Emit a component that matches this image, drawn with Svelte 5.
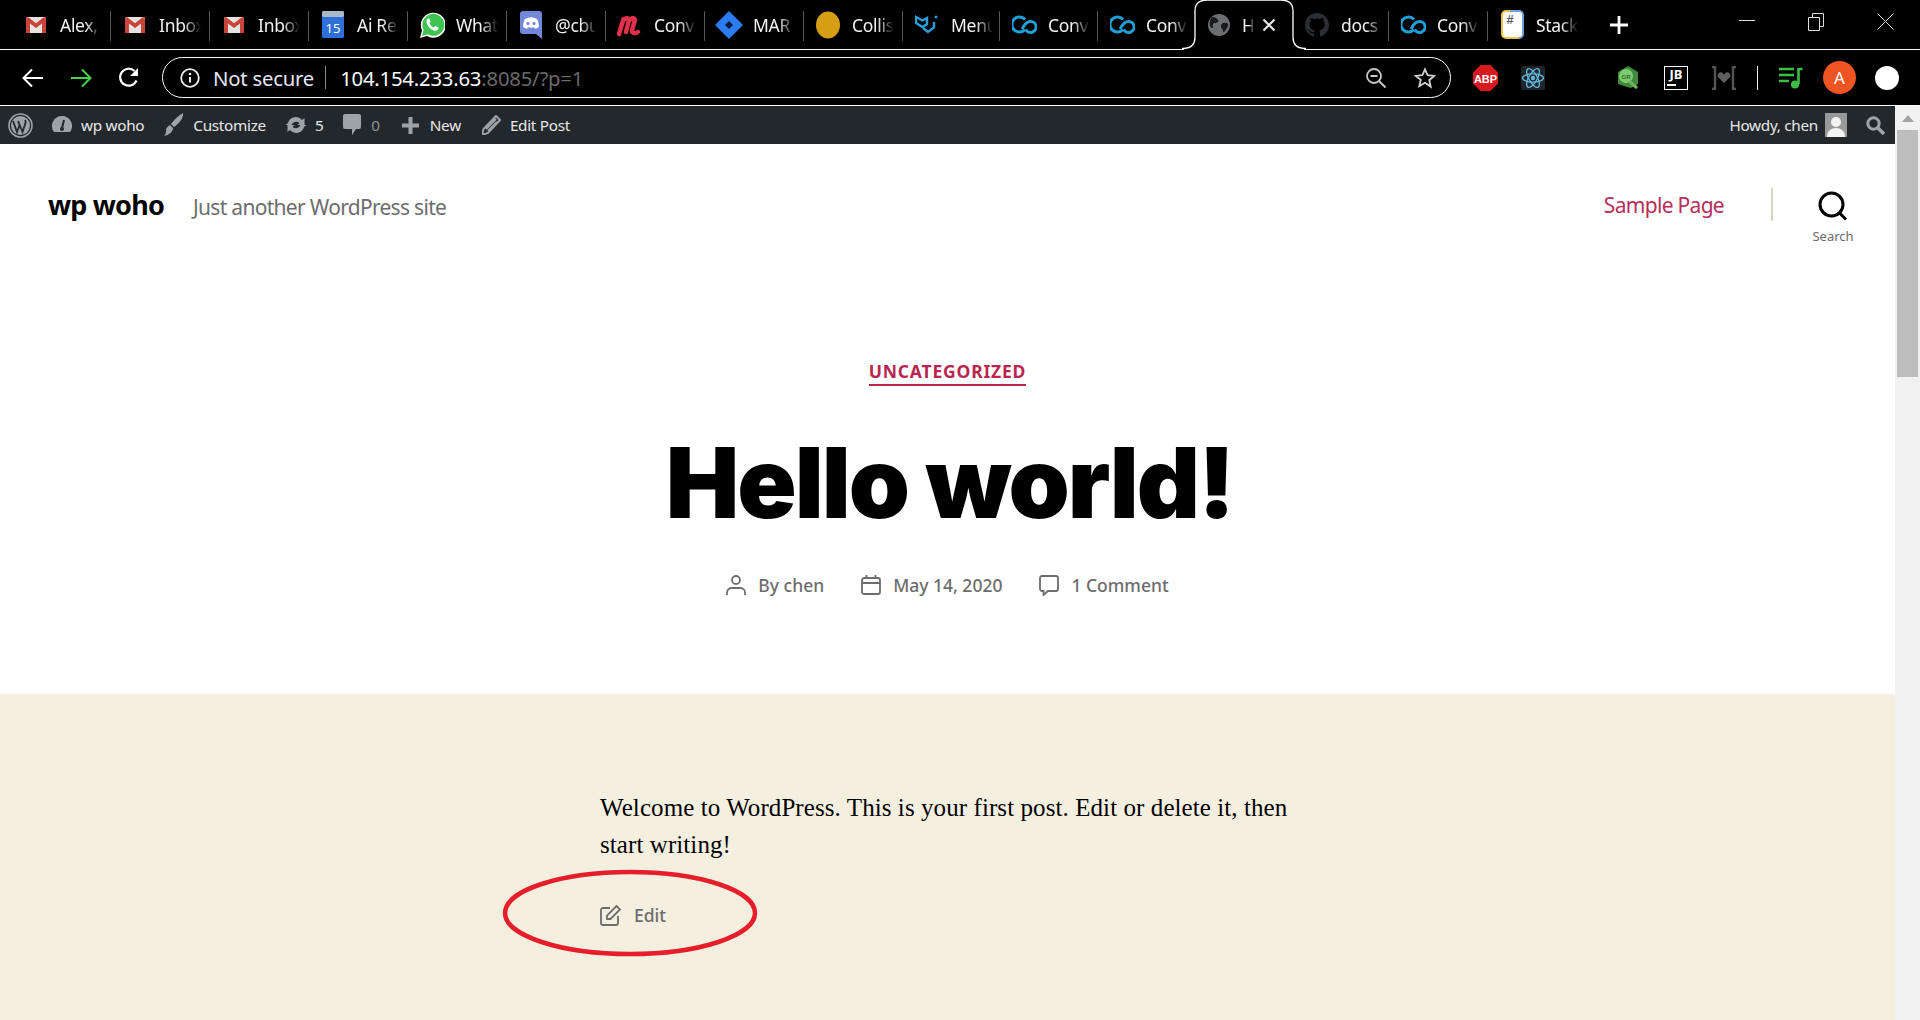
<script>
  const tabs = [
    { i: 'gmail', t: 'Alex,' }, { i: 'gmail', t: 'Inbox' }, { i: 'gmail', t: 'Inbox' },
    { i: 'cal', t: 'Ai Re' }, { i: 'wa', t: 'What' }, { i: 'discord', t: '@cbu' },
    { i: 'meister', t: 'Conv' }, { i: 'jira', t: 'MAR' }, { i: 'dot', t: 'Collis' },
    { i: 'mui', t: 'Menu' }, { i: 'co', t: 'Conv' }, { i: 'co', t: 'Conv' },
    { i: 'globe', t: 'H', active: true }, { i: 'gh', t: 'docs' }, { i: 'co', t: 'Conv' },
    { i: 'stack', t: 'Stack' }
  ];
</script>

{#snippet favicon(kind)}
  {#if kind === 'gmail'}
    <svg width="22" height="18" viewBox="0 0 22 18"><rect x="1" y="1" width="20" height="16" rx="1.5" fill="#e6e2df"/><path d="M1 2.500V17h4V7.500l6 4.600 6-4.600V17h4V2.500L19 1l-8 6.200L3 1z" fill="#c9453a"/></svg>
  {:else if kind === 'cal'}
    <svg width="22" height="27" viewBox="0 0 22 27"><rect x="0" y="0" width="22" height="27" rx="1.500" fill="#2f6fd8"/><rect x="0" y="0" width="22" height="6" rx="1.500" fill="#a9b8c8"/><text x="11" y="22" text-anchor="middle" class="cal">15</text></svg>
  {:else if kind === 'wa'}
    <svg width="26" height="28" viewBox="0 0 26 28"><path d="M1 27l2-7.500A12.500 12.500 0 1 1 8 25z" fill="#fff"/><path d="M3 25l1.600-6A11 11 0 1 1 8.500 23.200z" fill="#3fc351"/><path d="M9 7.500c-1.500 1-2 3-1 5.500 1.300 3.200 3.800 5.600 6.800 6.500 2.300.7 4-.2 4.700-1.800l-.1-1.200-3-1.500-1.500 1.600c-2-.7-3.900-2.600-4.600-4.500l1.200-1.400-1.200-3.100z" fill="#fff"/></svg>
  {:else if kind === 'discord'}
    <svg width="22" height="28" viewBox="0 0 22 28"><path d="M3 0h16a3 3 0 0 1 3 3v25l-6-5H3a3 3 0 0 1-3-3V3a3 3 0 0 1 3-3z" fill="#7289da"/><path d="M5 8c4-2.200 8-2.200 12 0 1.400 2.800 2 5.500 1.800 8-1.500 1.100-2.800 1.600-3.800 1.800l-1-1.500c-2 .6-4 .6-6 0l-1 1.500c-1-.2-2.300-.7-3.800-1.800C3 13.500 3.600 10.800 5 8z" fill="#fff"/><circle cx="8" cy="12.500" r="1.600" fill="#7289da"/><circle cx="14" cy="12.500" r="1.600" fill="#7289da"/></svg>
  {:else if kind === 'meister'}
    <svg width="28" height="24" viewBox="0 0 28 24"><path d="M3 21L7.500 6M7 8c2-3 5-4 6-1L10 19M13 8c2-3 5-4 6-1l-3 10c-.5 3 3 4 6 2" fill="none" stroke="#e2304a" stroke-width="4.500" stroke-linecap="round"/></svg>
  {:else if kind === 'jira'}
    <svg width="28" height="28" viewBox="0 0 28 28"><path d="M14 0l14 14-14 14L0 14z" fill="#2a7cf0"/><path d="M14 10l4 4-4 4-4-4z" fill="#041a38"/></svg>
  {:else if kind === 'dot'}
    <svg width="24" height="28" viewBox="0 0 24 28"><ellipse cx="12" cy="14" rx="12" ry="13.500" fill="#d69e14"/></svg>
  {:else if kind === 'mui'}
    <svg width="25" height="21" viewBox="0 0 25 21"><path d="M1 3l6.500 3.500L12 4v6l-4.500 3L1 9z" fill="none" stroke="#2a9fd8" stroke-width="2.400"/><path d="M8 14l5 4 6-4.500V8" fill="none" stroke="#2a9fd8" stroke-width="2.400"/><circle cx="21" cy="3" r="1.500" fill="#2a9fd8"/></svg>
  {:else if kind === 'co'}
    <svg width="25" height="19" viewBox="0 0 25 19"><path d="M13 4.500A7.500 7.500 0 1 0 13 14.500" fill="none" stroke="#1f9fd8" stroke-width="3"/><path d="M10 14C12 11 13.500 6.500 18.500 6.500a5.500 5.500 0 1 1-4.800 8" fill="none" stroke="#1f9fd8" stroke-width="3"/></svg>
  {:else if kind === 'globe'}
    <svg width="22" height="22" viewBox="0 0 22 22"><circle cx="11" cy="11" r="11" fill="#6d6e70"/><path d="M4 3c3 0 5 1 6 3s-1 3-3 3-3 2-2 4-2 1-3-1 0-7 2-9zM19 9c-3-1-6 0-6 3s2 2 2 5 2 0 4-3 1-4 0-5z" fill="#1a1a1c"/></svg>
  {:else if kind === 'gh'}
    <svg width="24" height="24" viewBox="0 0 16 16"><path fill="#2b2e33" d="M8 0C3.580 0 0 3.580 0 8c0 3.540 2.290 6.530 5.470 7.590.4.070.55-.170.55-.380 0-.190-.010-.820-.010-1.490-2.010.370-2.530-.490-2.690-.940-.090-.230-.480-.940-.820-1.130-.280-.150-.680-.520-.010-.530.630-.010 1.080.580 1.230.820.720 1.210 1.870.870 2.330.660.070-.520.280-.870.510-1.070-1.780-.200-3.640-.890-3.640-3.950 0-.870.310-1.590.820-2.150-.080-.200-.360-1.020.080-2.120 0 0 .670-.210 2.200.820.640-.180 1.320-.270 2-.270s1.360.090 2 .270c1.530-1.040 2.200-.820 2.200-.820.440 1.100.160 1.920.080 2.120.510.560.820 1.270.820 2.150 0 3.070-1.870 3.750-3.650 3.950.290.250.540.730.540 1.480 0 1.070-.010 1.930-.010 2.200 0 .210.150.460.550.380A8.010 8.010 0 0 0 16 8c0-4.420-3.580-8-8-8z"/></svg>
  {:else if kind === 'stack'}
    <svg width="23" height="29" viewBox="0 0 23 29"><rect x="1" y="1" width="21" height="27" rx="4" fill="#fff"/><path d="M1 5v19a4 4 0 0 0 4 4h13" fill="none" stroke="#e8c64a" stroke-width="2"/><path d="M1 5a4 4 0 0 1 4-4h4" fill="none" stroke="#e8c64a" stroke-width="2"/><path d="M18 28a4 4 0 0 0 4-4V5a4 4 0 0 0-4-4H9" fill="none" stroke="#6fa3dc" stroke-width="2"/><text x="9" y="14" text-anchor="middle" class="hash">#</text></svg>
  {/if}
{/snippet}

<div class="screen">
  <div class="tabstrip">
    {#each tabs as tab}
      <div class="tab" class:active={tab.active}>
        {#if tab.active}
          <svg class="tabshape" width="124" height="51" viewBox="0 0 124 51"><path d="M13 38V12Q13 .5 25 .5H99Q111 .5 111 12V38Q111 49 122 49.500V51H2V49.500Q13 49 13 38z" fill="#000"/><path d="M0 49.500H2Q13 49 13 38V12Q13 1 25 1H99Q111 1 111 12V38Q111 49 122 49.500H124" fill="none" stroke="#fff" stroke-width="1.300"/></svg>
        {/if}
        <span class="fav">{@render favicon(tab.i)}</span>
        <span class="title">{tab.t}</span>
        {#if tab.active}
          <svg class="close" width="14" height="14" viewBox="0 0 14 14"><path d="M1.500 1.500l11 11M12.500 1.500l-11 11" stroke="#e8e8e8" stroke-width="2.200"/></svg>
        {/if}
      </div>
    {/each}
    <svg class="newtab" width="18" height="18" viewBox="0 0 18 18"><path d="M9 0v18M0 9h18" stroke="#fff" stroke-width="2.800"/></svg>
    <div class="winctl">
      <svg width="16" height="16" viewBox="0 0 16 16"><path d="M0 6.500h16" stroke="#ddd" stroke-width="1"/></svg>
      <svg width="16" height="18" viewBox="0 0 16 18"><path d="M.5 4.500h11v13H.500zM4.500 4.500v-4h11v13h-4" fill="none" stroke="#ddd"/></svg>
      <svg width="17" height="17" viewBox="0 0 17 17"><path d="M.5.500l16 16M16.500.500l-16 16" stroke="#ddd"/></svg>
    </div>
  </div>

  <div class="toolbar">
    <svg class="nav" width="24" height="24" viewBox="0 0 24 24"><path d="M22 12H3M11 3.500L2.500 12l8.500 8.500" fill="none" stroke="#fff" stroke-width="2"/></svg>
    <svg class="nav" width="24" height="24" viewBox="0 0 24 24"><path d="M2 12h19M13 3.500l8.500 8.500-8.500 8.500" fill="none" stroke="#45d34e" stroke-width="2"/></svg>
    <svg class="nav" width="24" height="24" viewBox="0 0 24 24"><path d="M19.500 14.500A8.500 8.500 0 1 1 17.500 5" fill="none" stroke="#fff" stroke-width="2.200"/><path d="M21 2v8h-8z" fill="#fff"/></svg>
    <div class="omnibox">
      <svg width="20" height="20" viewBox="0 0 20 20"><circle cx="10" cy="10" r="8.800" fill="none" stroke="#eee" stroke-width="1.800"/><path d="M10 9v5.500" stroke="#eee" stroke-width="2"/><circle cx="10" cy="6" r="1.300" fill="#eee"/></svg>
      <span class="insecure">Not secure</span>
      <span class="omnisep"></span>
      <span class="url">104.154.233.63<span class="urlrest">:8085/?p=1</span></span>
      <span class="spacer"></span>
      <svg width="22" height="22" viewBox="0 0 22 22"><circle cx="9" cy="9" r="7" fill="none" stroke="#c8c8c8" stroke-width="1.800"/><path d="M5.500 9h7M14 14l6.500 6.500" stroke="#c8c8c8" stroke-width="1.800"/></svg>
      <svg class="star" width="22" height="22" viewBox="0 0 24 24"><path d="M12 2.500l2.900 6.500 7.100.7-5.400 4.700 1.600 7L12 17.200 5.800 20.900l1.600-7L2 9.700 9.100 9z" fill="none" stroke="#d0d0d0" stroke-width="2"/></svg>
    </div>
    <div class="exts">
      <svg class="abp" width="25" height="26" viewBox="0 0 25 26"><path d="M7.500 0h10L25 7.500v11L17.500 26h-10L0 18.500v-11z" fill="#d61a1f"/><text x="12.500" y="17.500" text-anchor="middle" class="abptext">ABP</text></svg>
      <svg class="react" width="24" height="24" viewBox="0 0 24 24"><rect width="24" height="24" rx="2" fill="#20252b"/><g fill="none" stroke="#61b7d8" stroke-width="1.300"><ellipse cx="12" cy="12" rx="10.500" ry="4.200"/><ellipse cx="12" cy="12" rx="10.500" ry="4.200" transform="rotate(60 12 12)"/><ellipse cx="12" cy="12" rx="10.500" ry="4.200" transform="rotate(120 12 12)"/></g><circle cx="12" cy="12" r="2.200" fill="#61b7d8"/></svg>
      <svg class="gr" width="22" height="24" viewBox="0 0 22 24"><path d="M11 0l10 6v12l-7 4-4-1-9-3V6z" fill="#3d8a3a"/><circle cx="9" cy="10" r="7" fill="#7fc96f"/><path d="M12 15l8 7" stroke="#6fb45f" stroke-width="3"/><text x="9" y="12.500" text-anchor="middle" class="grtext">GR</text></svg>
      <div class="jb"><span class="jbt">JB</span><span class="jbl"></span></div>
      <svg class="hb" width="24" height="24" viewBox="0 0 24 24"><path d="M0 1h3v22H0M24 1h-3v22h3" fill="none" stroke="#555" stroke-width="2.400"/><path d="M12 17l-5.500-5.500a3 3 0 0 1 4.500-4l1 1 1-1a3 3 0 0 1 4.500 4z" fill="#5f5f5f"/></svg>
      <span class="extsep"></span>
      <svg class="music" width="24" height="22" viewBox="0 0 24 22"><path d="M0 2h15M0 8h15M0 14h10" stroke="#3cc043" stroke-width="2.400"/><path d="M20 2h3.500M19.500 1v16" stroke="#3cc043" stroke-width="2.600"/><circle cx="16" cy="17.500" r="4" fill="#3cc043"/></svg>
      <div class="avatar">A</div>
      <div class="whitedot"></div>
    </div>
  </div>

  <div class="viewport">
    <div class="main">
      <div class="adminbar">
        <svg class="ab-wp" width="25" height="25" viewBox="0 0 25 25"><circle cx="12.500" cy="12.500" r="11.500" fill="none" stroke="#9ea3a8" stroke-width="1.600"/><circle cx="12.500" cy="12.500" r="9.500" fill="#9ea3a8"/><path d="M5 8l4 11 2.500-7-1.300-4M10 8l4.500 11 3-9c.5-1.500 0-2-.5-3" fill="none" stroke="#23282d" stroke-width="1.800"/></svg>
        <svg class="ab-gauge" width="20" height="18" viewBox="0 0 20 18"><path d="M10 0a10 10 0 0 1 8 16H2A10 10 0 0 1 10 0z" fill="#9ea3a8"/><path d="M12 4l-2 8" stroke="#23282d" stroke-width="2"/><circle cx="10" cy="13" r="2" fill="#23282d"/></svg>
        <span class="ab-site">wp woho</span>
        <svg class="ab-brush" width="20" height="24" viewBox="0 0 20 24"><path d="M19 0c1 4-4 11-9 14l-3-3C10 7 15 2 19 0zM6 12l3 3c0 4-4 7-9 8 2-2 2-4 2-6s2-4 4-5z" fill="#9ea3a8"/></svg>
        <span class="ab-custom">Customize</span>
        <svg class="ab-sync" width="22" height="20" viewBox="0 0 22 20"><path d="M3 8a8 8 0 0 1 14-3l2.500-2v7h-7l2-2A5 5 0 0 0 6.500 10H.5zM19 12a8 8 0 0 1-14 3l-2.500 2v-7h7l-2 2A5 5 0 0 0 15.500 10h6z" fill="#9ea3a8"/></svg>
        <span class="ab-five">5</span>
        <svg class="ab-bubble" width="18" height="22" viewBox="0 0 18 22"><path d="M2 0h14a2 2 0 0 1 2 2v11a2 2 0 0 1-2 2h-3l-4 6v-6H2a2 2 0 0 1-2-2V2a2 2 0 0 1 2-2z" fill="#9ea3a8"/></svg>
        <span class="ab-zero">0</span>
        <svg class="ab-plus" width="17" height="17" viewBox="0 0 17 17"><path d="M6.500 0h4v6.500H17v4h-6.500V17h-4v-6.500H0v-4h6.500z" fill="#9ea3a8"/></svg>
        <span class="ab-new">New</span>
        <svg class="ab-pencil" width="19" height="20" viewBox="0 0 19 20"><path d="M14 1l4 4L6 18l-6 2 1.500-6zM4 14l10-10M6 16l9-9" fill="none" stroke="#9ea3a8" stroke-width="2"/></svg>
        <span class="ab-edit">Edit Post</span>
        <span class="spacer"></span>
        <span class="ab-howdy">Howdy, chen</span>
        <svg class="ab-user" width="22" height="24" viewBox="0 0 22 24"><rect width="22" height="24" fill="#9a9a9a"/><circle cx="11" cy="9" r="5" fill="#f3f3f3"/><path d="M2 24c0-6 4-9 9-9s9 3 9 9z" fill="#f3f3f3"/></svg>
        <svg class="ab-search" width="19" height="19" viewBox="0 0 19 19"><circle cx="7.500" cy="7.500" r="5.700" fill="none" stroke="#9ea3a8" stroke-width="3"/><path d="M12 12l6 6" stroke="#9ea3a8" stroke-width="3.500"/></svg>
      </div>

      <header class="siteheader">
        <div class="brand">
          <span class="sitetitle">wp woho</span>
          <span class="tagline">Just another WordPress site</span>
        </div>
        <nav class="sitenav">
          <span class="navlink">Sample Page</span>
          <span class="navsep"></span>
          <div class="searchtoggle">
            <svg width="30" height="30" viewBox="0 0 30 30"><circle cx="13.500" cy="13.500" r="11.500" fill="none" stroke="#000" stroke-width="3"/><path d="M21.500 22l6.500 6.500" stroke="#000" stroke-width="3"/></svg>
            <span class="searchlabel">Search</span>
          </div>
        </nav>
      </header>

      <section class="posthead">
        <span class="category">UNCATEGORIZED</span>
        <h1>Hello world!</h1>
        <div class="meta">
          <span class="metaitem">
            <svg width="20" height="20" viewBox="0 0 20 20"><circle cx="10" cy="5" r="4" fill="none" stroke="#6d6d6d" stroke-width="1.800"/><path d="M1 20v-2.500A4.500 4.500 0 0 1 5.500 13h9a4.500 4.500 0 0 1 4.500 4.500V20" fill="none" stroke="#6d6d6d" stroke-width="1.800"/></svg>
            By chen
          </span>
          <span class="metaitem">
            <svg width="20" height="20" viewBox="0 0 20 20"><rect x="1" y="3" width="18" height="16" rx="2" fill="none" stroke="#6d6d6d" stroke-width="1.800"/><path d="M1 8h18M5.500 0v4M14.500 0v4" stroke="#6d6d6d" stroke-width="1.800"/></svg>
            May 14, 2020
          </span>
          <span class="metaitem">
            <svg width="20" height="21" viewBox="0 0 20 21"><path d="M3 1h14a2 2 0 0 1 2 2v11a2 2 0 0 1-2 2H9l-4.500 4v-4H3a2 2 0 0 1-2-2V3a2 2 0 0 1 2-2z" fill="none" stroke="#6d6d6d" stroke-width="1.800"/></svg>
            1 Comment
          </span>
        </div>
      </section>

      <section class="postbody">
        <div class="column">
          <p>Welcome to WordPress. This is your first post. Edit or delete it, then start writing!</p>
          <div class="editlink">
            <svg width="21" height="21" viewBox="0 0 21 21"><path d="M10 3H3a2 2 0 0 0-2 2v13a2 2 0 0 0 2 2h13a2 2 0 0 0 2-2v-7" fill="none" stroke="#6d6d6d" stroke-width="1.800"/><path d="M16.500 1L20 4.500 10.500 14H7v-3.500z" fill="none" stroke="#6d6d6d" stroke-width="1.800"/></svg>
            <span>Edit</span>
            <svg class="ring" width="258" height="90" viewBox="0 0 258 90"><ellipse cx="129" cy="45" rx="125" ry="41" fill="none" stroke="#e61e2b" stroke-width="4.500"/></svg>
          </div>
        </div>
      </section>
    </div>

    <div class="scrollbar">
      <div class="sb-up"><svg width="12" height="7" viewBox="0 0 12 7"><path d="M6 0l6 7H0z" fill="#a3a3a3"/></svg></div>
      <div class="sb-thumb"></div>
    </div>
  </div>
</div>

<style>
  :global(body) { margin: 0; background: #000; }
  .screen { width: 1920px; height: 1020px; overflow: hidden; display: flex; flex-direction: column; font-family: "Noto Sans", "Open Sans", sans-serif; background: #000; color: #fff; }
  svg { display: block; flex: none; }

  .tabstrip { height: 49px; padding-left: 12px; display: flex; align-items: stretch; border-bottom: 1px solid #fff; flex: none; position: relative; }
  .tab { width: 99px; flex: none; box-sizing: border-box; display: flex; align-items: center; padding-left: 12px; position: relative; }
  .tab::after { content: ""; position: absolute; right: 0; top: 11px; height: 30px; width: 1px; background: #555; }
  .tab:nth-child(12)::after, .tab.active::after, .tab:nth-child(16)::after { display: none; }
  .tab:nth-child(10) { width: 97px; }
  .tab:nth-child(11) { width: 98px; }
  .tab:nth-child(12) { width: 97px; }
  .tab:nth-child(14) { width: 96px; }
  .fav { width: 24px; display: flex; justify-content: center; flex: none; position: relative; }
  .title { margin-left: 12px; width: 42px; flex: none; font-size: 17.500px; white-space: nowrap; overflow: hidden; color: #f2f2f2; letter-spacing: -0.300px; position: relative; -webkit-mask-image: linear-gradient(90deg, #000 60%, transparent); mask-image: linear-gradient(90deg, #000 60%, transparent); }
  .tab.active { width: 98px; z-index: 1; }
  .tab.active .title { width: 12px; margin-left: 11px; }
  .tabshape { position: absolute; left: -13px; top: -1px; }
  .close { margin-left: 8px; position: relative; }
  .newtab { align-self: center; margin-left: 23px; }
  .winctl { margin-left: 111px; display: flex; gap: 53px; align-items: center; padding-bottom: 6px; }

  .toolbar { height: 55px; display: flex; align-items: center; padding-left: 21px; border-bottom: 1px solid #fff; flex: none; }
  .nav { margin-right: 24px; }
  .omnibox { width: 1289px; height: 41px; box-sizing: border-box; border: 1px solid #fff; border-radius: 21px; margin-left: -3px; display: flex; align-items: center; padding-left: 17px; padding-right: 14px; }
  .insecure { margin-left: 13px; font-size: 20.300px; color: #e6e6f5; letter-spacing: -0.200px; }
  .omnisep { width: 1px; height: 23px; background: #888; margin: 0 14px 0 11px; }
  .url { font-size: 20.300px; color: #fff; letter-spacing: -0.200px; }
  .urlrest { color: #6a6a6a; }
  .spacer { flex: 1; }
  .star { margin-left: 27px; }
  .exts { display: flex; align-items: center; }
  .abp { margin-left: 22px; }
  .react { margin-left: 23px; }
  .gr { margin-left: 72px; }
  .jb { margin-left: 25px; width: 24px; height: 24px; box-sizing: border-box; border: 1px solid #fff; background: #000; display: flex; flex-direction: column; align-items: flex-start; padding: 0 2px; }
  .jbt { font-size: 13px; font-weight: 700; line-height: 14px; color: #fff; width: 100%; text-align: center; }
  .jbl { width: 9px; height: 2px; background: #fff; margin-top: 3px; }
  .hb { margin-left: 24px; }
  .extsep { width: 1px; height: 24px; background: #eee; margin-left: 21px; }
  .music { margin-left: 21px; }
  .avatar { width: 33px; height: 33px; margin-left: 20px; border-radius: 50%; background: #ef5423; display: flex; align-items: center; justify-content: center; font-size: 17px; color: #fff; }
  .whitedot { width: 24px; height: 24px; margin-left: 19px; border-radius: 50%; background: #fff; }

  .viewport { flex: 1; display: flex; min-height: 0; }
  .main { width: 1895px; flex: none; background: #fff; }

  .adminbar { height: 38px; background: #23282d; display: flex; align-items: center; padding: 0 10px 0 8px; font-size: 15.300px; color: #e8e8e8; letter-spacing: -0.300px; }
  .ab-gauge { margin-left: 19px; }
  .ab-site { margin-left: 9px; }
  .ab-brush { margin-left: 20px; }
  .ab-custom { margin-left: 9px; }
  .ab-sync { margin-left: 19px; }
  .ab-five { margin-left: 8px; }
  .ab-bubble { margin-left: 20px; }
  .ab-zero { margin-left: 10px; color: #8f9499; }
  .ab-plus { margin-left: 22px; }
  .ab-new { margin-left: 11px; }
  .ab-pencil { margin-left: 21px; }
  .ab-edit { margin-left: 9px; }
  .ab-user { margin-left: 7px; }
  .ab-search { margin-left: 19px; }

  .siteheader { display: flex; justify-content: space-between; padding: 41px 32px 0 48px; height: 69px; color: #000; }
  .brand { display: flex; align-items: baseline; gap: 29px; height: 40px; line-height: 40px; }
  .sitetitle { font-size: 27px; font-weight: 700; letter-spacing: -0.800px; color: #000; }
  .tagline { font-size: 21px; color: #6d6d6d; letter-spacing: -0.700px; }
  .sitenav { display: flex; align-items: flex-start; }
  .navlink { font-size: 21px; color: #b62f5a; line-height: 36px; margin-top: 2px; letter-spacing: -0.700px; }
  .navsep { width: 2px; height: 33px; background: #d8d4c6; margin-left: 47px; margin-top: 3px; }
  .searchtoggle { width: 60px; margin-left: 30px; display: flex; flex-direction: column; align-items: center; color: #6d6d6d; }
  .searchtoggle svg { margin-top: 6px; }
  .searchlabel { font-size: 13px; margin-top: 6px; line-height: 18px; }

  .posthead { display: flex; flex-direction: column; align-items: center; padding-top: 105px; height: 440px; box-sizing: border-box; }
  .category { font-size: 17.500px; font-weight: 700; color: #b8264f; letter-spacing: 0.800px; line-height: 24px; border-bottom: 2px solid #b8264f; padding-bottom: 1px; }
  h1 { margin: 41px 0 0; padding-left: 4px; font-family: Inter, "Noto Sans", sans-serif; font-weight: 900; font-size: 98px; line-height: 112px; letter-spacing: -2px; color: #000; }
  .meta { display: flex; gap: 37px; margin-top: 34px; font-size: 17.500px; font-weight: 500; color: #6d6d6d; }
  .metaitem { display: flex; align-items: center; gap: 12px; line-height: 24px; }

  .postbody { background: #f5efe0; height: 400px; padding-top: 95px; box-sizing: border-box; }
  .column { width: 695px; margin-left: 600px; }
  p { margin: 0; font-family: "Liberation Serif", serif; font-size: 25px; letter-spacing: 0.080px; line-height: 37px; color: #000; }
  .editlink { position: relative; margin-top: 39px; display: flex; align-items: center; gap: 13px; font-size: 17.500px; font-weight: 500; color: #6d6d6d; height: 26px; }
  .ring { position: absolute; left: -99px; top: -34px; }

  .scrollbar { width: 25px; flex: none; background: #f1f1f1; display: flex; flex-direction: column; align-items: center; }
  .sb-up { height: 24px; display: flex; align-items: center; justify-content: center; flex: none; }
  .sb-thumb { width: 21px; height: 247px; background: #bdbdbd; }
  .cal { font: 13px "Noto Sans", sans-serif; fill: #fff; }
  .hash { font: 700 12px "Liberation Mono", monospace; fill: #555; }
  .abptext { font: 700 11px "Liberation Sans", sans-serif; fill: #fff; }
  .grtext { font: 700 6px "Liberation Sans", sans-serif; fill: #2c6b2a; }
</style>
